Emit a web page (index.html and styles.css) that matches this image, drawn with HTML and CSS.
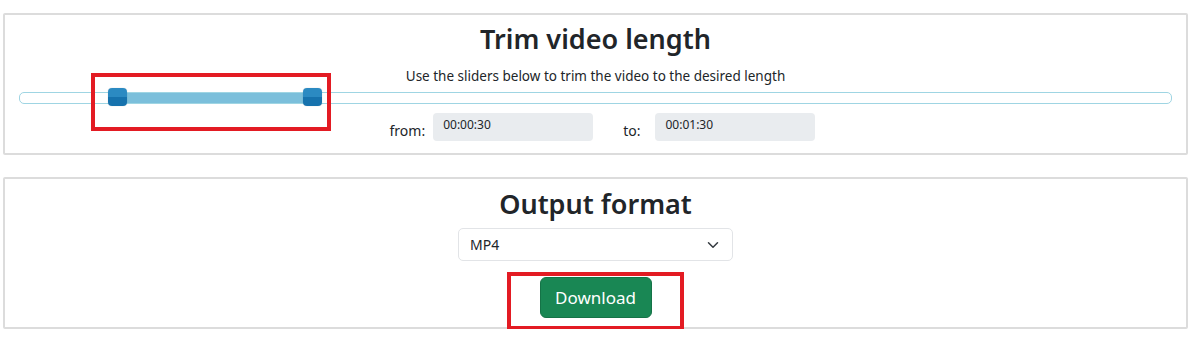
FILE: index.html
```html
<!DOCTYPE html>
<html lang="en">
<head>
    <meta charset="UTF-8">
    <meta name="viewport" content="width=device-width, initial-scale=1.0">
    <title>Video Trimmer</title>
    <link rel="stylesheet" href="styles.css">
</head>
<body>

    <main class="wrap">
        <section class="card trim-card">
            <h2>Trim video length</h2>
            <p class="hint">Use the sliders below to trim the video to the desired length</p>

            <div class="slider">
                <div class="slider-range"></div>
                <span class="handle handle-start"></span>
                <span class="handle handle-end"></span>
            </div>

            <div class="times">
                <label class="time-label" for="fromTime">from:</label>
                <input type="text" id="fromTime" class="time-input" value="00:00:30" readonly>
                <label class="time-label to-label" for="toTime">to:</label>
                <input type="text" id="toTime" class="time-input" value="00:01:30" readonly>
            </div>

            <div class="mark mark-slider"></div>
        </section>

        <section class="card format-card">
            <h2>Output format</h2>
            <div class="select">
                <span>MP4</span>
                <svg width="12" height="12" viewBox="0 0 16 16">
                    <path d="M2 5l6 6 6-6" fill="none" stroke="#343a40" stroke-width="2" stroke-linecap="round" stroke-linejoin="round"/>
                </svg>
            </div>
            <button class="download">Download</button>

            <div class="mark mark-button"></div>
        </section>
    </main>

</body>
</html>
```

FILE: styles.css
```css
body {
    margin: 0;
    padding: 0;
    font-family: "Noto Sans", "Open Sans", sans-serif;
    color: #212529;
    background-color: #ffffff;
}
.wrap {
    padding: 13px 12px 0 3px;
    display: flex;
    flex-direction: column;
    gap: 22px;
}
.card {
    position: relative;
    border: 2px solid #dcdcdc;
    border-radius: 2px;
    display: flex;
    flex-direction: column;
    align-items: center;
    background-color: #fff;
}
.card h2 {
    margin: 0;
    font-size: 27px;
    font-weight: 600;
    line-height: 36px;
}
.trim-card {
    height: 138px;
    padding: 0 14px;
}
.trim-card h2 {
    margin-top: 6px;
}
.hint {
    margin: 9px 0 0;
    font-size: 13.5px;
    line-height: 20px;
}
.slider {
    position: relative;
    align-self: stretch;
    height: 10px;
    margin-top: 6px;
    border: 1px solid #9fd5e3;
    border-radius: 5px;
}
.slider-range {
    position: absolute;
    left: 97px;
    width: 196px;
    top: 0;
    bottom: 0;
    background-color: #7bbfdb;
}
.handle {
    position: absolute;
    top: -5px;
    width: 19px;
    height: 18px;
    border-radius: 4px;
    background: linear-gradient(#2b8ac2 50%, #1672ad 50%);
    box-shadow: 0 0 1px rgba(0, 0, 0, 0.3);
}
.handle-start {
    left: 88px;
}
.handle-end {
    left: 283px;
}
.times {
    display: flex;
    align-items: flex-end;
    margin-top: 9px;
    margin-left: 14px;
    font-size: 14px;
}
.time-label {
    margin-right: 8px;
    line-height: 18px;
    margin-bottom: 1px;
}
.to-label {
    margin-left: 30px;
    margin-right: 15px;
}
.time-input {
    width: 160px;
    height: 28px;
    box-sizing: border-box;
    border: none;
    border-radius: 4px;
    background-color: #e9ecef;
    padding: 0 0 6px 10px;
    font-family: inherit;
    font-size: 12px;
    color: #212529;
}
.format-card {
    height: 148px;
}
.format-card h2 {
    margin-top: 7px;
}
.select {
    margin-top: 6px;
    width: 275px;
    height: 33px;
    box-sizing: border-box;
    border: 1px solid #e2e4e7;
    border-radius: 5px;
    display: flex;
    align-items: center;
    justify-content: space-between;
    padding: 0 13px 0 11px;
    font-size: 14px;
}
.download {
    margin-top: 16px;
    width: 112px;
    height: 41px;
    border: 1px solid #157347;
    border-radius: 6px;
    background-color: #198754;
    color: #ffffff;
    font-family: inherit;
    font-size: 17px;
    cursor: pointer;
}
.mark {
    position: absolute;
    border: 4px solid #e31b23;
    box-sizing: border-box;
}
.mark-slider {
    left: 86px;
    top: 58px;
    width: 240px;
    height: 58px;
}
.mark-button {
    left: 502px;
    top: 93px;
    width: 177px;
    height: 58px;
}
```
